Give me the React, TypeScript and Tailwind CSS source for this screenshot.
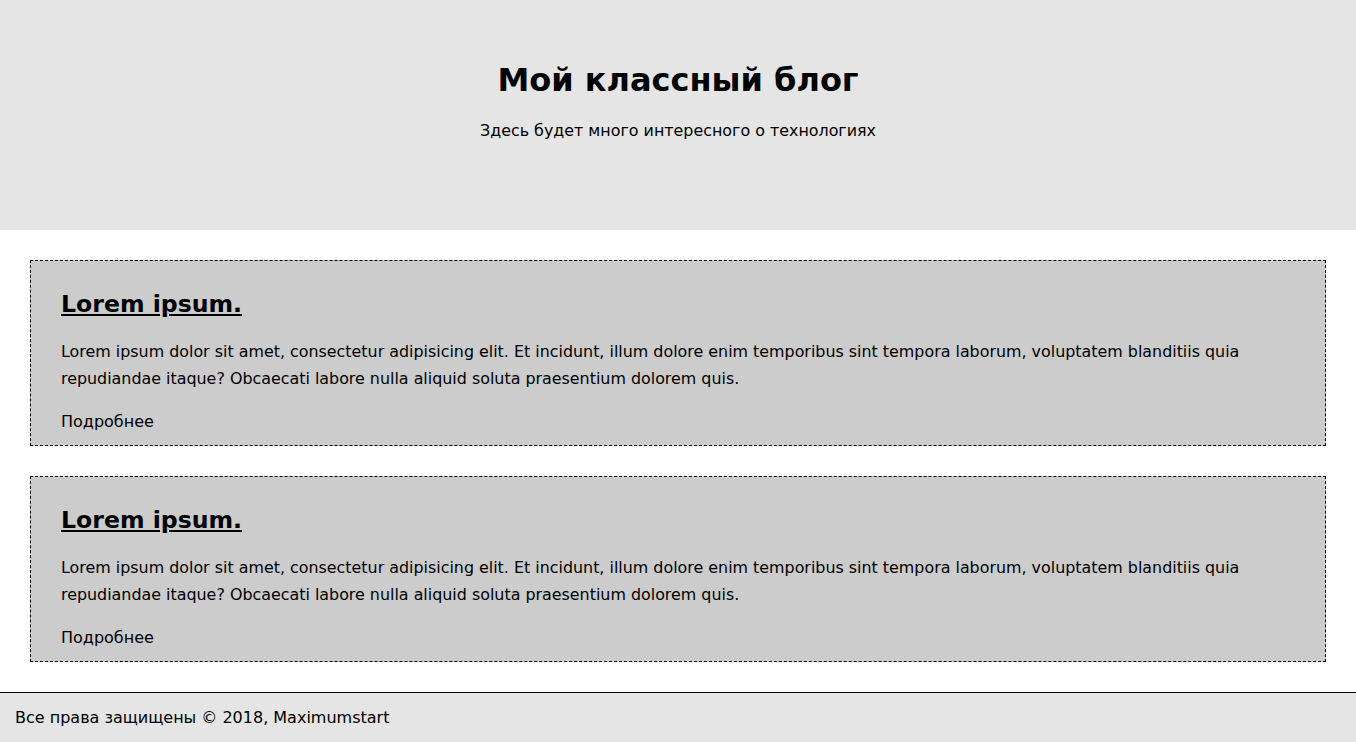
import React from "react";

const posts = [1, 2];

export default function App() {
  return (
    <div className="min-h-screen bg-white text-black font-['DejaVu_Sans',sans-serif]">
      {/* Header */}
      <header className="h-[230px] bg-[#e5e5e5] pt-[62px] text-center">
        <h1 className="text-[32px] leading-[37px] font-bold">Мой классный блог</h1>
        <p className="mt-[22px] text-[15.9px] leading-[19px]">Здесь будет много интересного о технологиях</p>
      </header>

      {/* Posts */}
      <main className="flex flex-col gap-[30px] p-[30px]">
        {posts.map((id) => (
          <article key={id} className="border border-dashed border-black bg-[#cccccc] px-[30px] pt-[10px] pb-[10px]">
            <h2 className="mt-[19px] text-[23.6px] leading-[28px] font-bold">
              <a href="#" className="underline">Lorem ipsum.</a>
            </h2>
            <p className="mt-[20px] text-[15.9px] leading-[27px]">
              Lorem ipsum dolor sit amet, consectetur adipisicing elit. Et incidunt, illum dolore enim temporibus sint tempora laborum, voluptatem blanditiis quia repudiandae itaque? Obcaecati labore nulla aliquid soluta praesentium dolorem quis.
            </p>
            <a href="#" className="block mt-[16px] text-base leading-[27px]">Подробнее</a>
          </article>
        ))}
      </main>

      {/* Footer */}
      <footer className="h-[51px] border-t border-black bg-[#e5e5e5] px-[15px] flex items-center">
        <p className="text-base">Все права защищены © 2018, Maximumstart</p>
      </footer>
    </div>
  );
}
